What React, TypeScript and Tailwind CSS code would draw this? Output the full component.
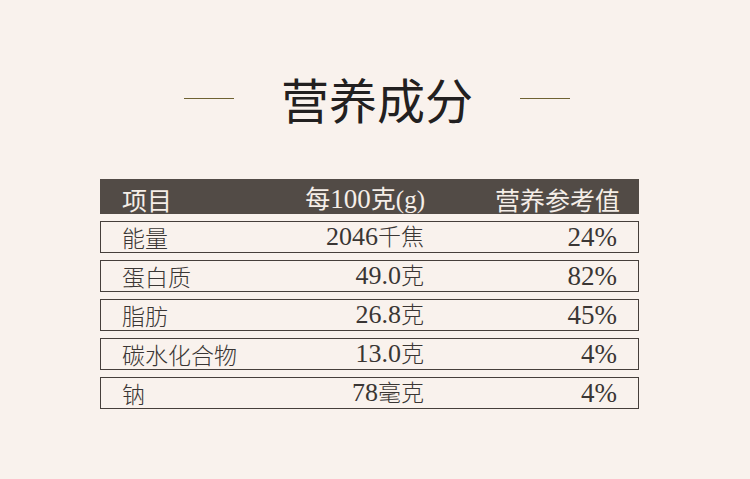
const rows = [
  { name: "能量", num: "2046", unit: "千焦", nrv: "24%" },
  { name: "蛋白质", num: "49.0", unit: "克", nrv: "82%" },
  { name: "脂肪", num: "26.8", unit: "克", nrv: "45%" },
  { name: "碳水化合物", num: "13.0", unit: "克", nrv: "4%" },
  { name: "钠", num: "78", unit: "毫克", nrv: "4%" },
];

const serif = "font-['Liberation_Serif','Noto_Sans_CJK_SC',serif]";
const cjk = "font-['Noto_Sans_CJK_SC',serif]";

export default function App() {
  return (
    <div className={`w-[750px] h-[479px] bg-[#f9f2ed] flex flex-col ${cjk}`}>
      {/* title */}
      <div className="mt-[74px] ml-[184px] flex items-center gap-[47px]">
        <div className="w-[50px] h-px bg-[#6f6232]" />
        <h1 className="text-[48px] leading-[48px] text-[#222020]">营养成分</h1>
        <div className="w-[50px] h-px bg-[#6f6232]" />
      </div>

      {/* table */}
      <div className="mt-[57px] ml-[100px] w-[539px] flex flex-col gap-[7px]">
        <div className="h-[35px] bg-[#524b46] text-[#f5eee8] text-[25px] grid grid-cols-[131px_172px_1fr] items-center pl-[22px] pr-[19px]">
          <span>项目</span>
          <span className="text-right">
            每<span className={`${serif} text-[27px]`}>100</span>克<span className={`${serif} text-[25px]`}>(g)</span>
          </span>
          <span className="text-right">营养参考值</span>
        </div>
        {rows.map((r) => (
          <div
            key={r.name}
            className="h-[32px] border-[1.5px] border-[#463f3b] text-[#3a3634] text-[23px] leading-none grid grid-cols-[130px_172px_1fr] items-center pl-[21px] pr-[21px]"
          >
            <span className="font-light">{r.name}</span>
            <span className="text-right font-light">
              <span className={`${serif} text-[26px]`}>{r.num}</span>
              {r.unit}
            </span>
            <span className={`text-right ${serif} text-[27px]`}>{r.nrv}</span>
          </div>
        ))}
      </div>
    </div>
  );
}
